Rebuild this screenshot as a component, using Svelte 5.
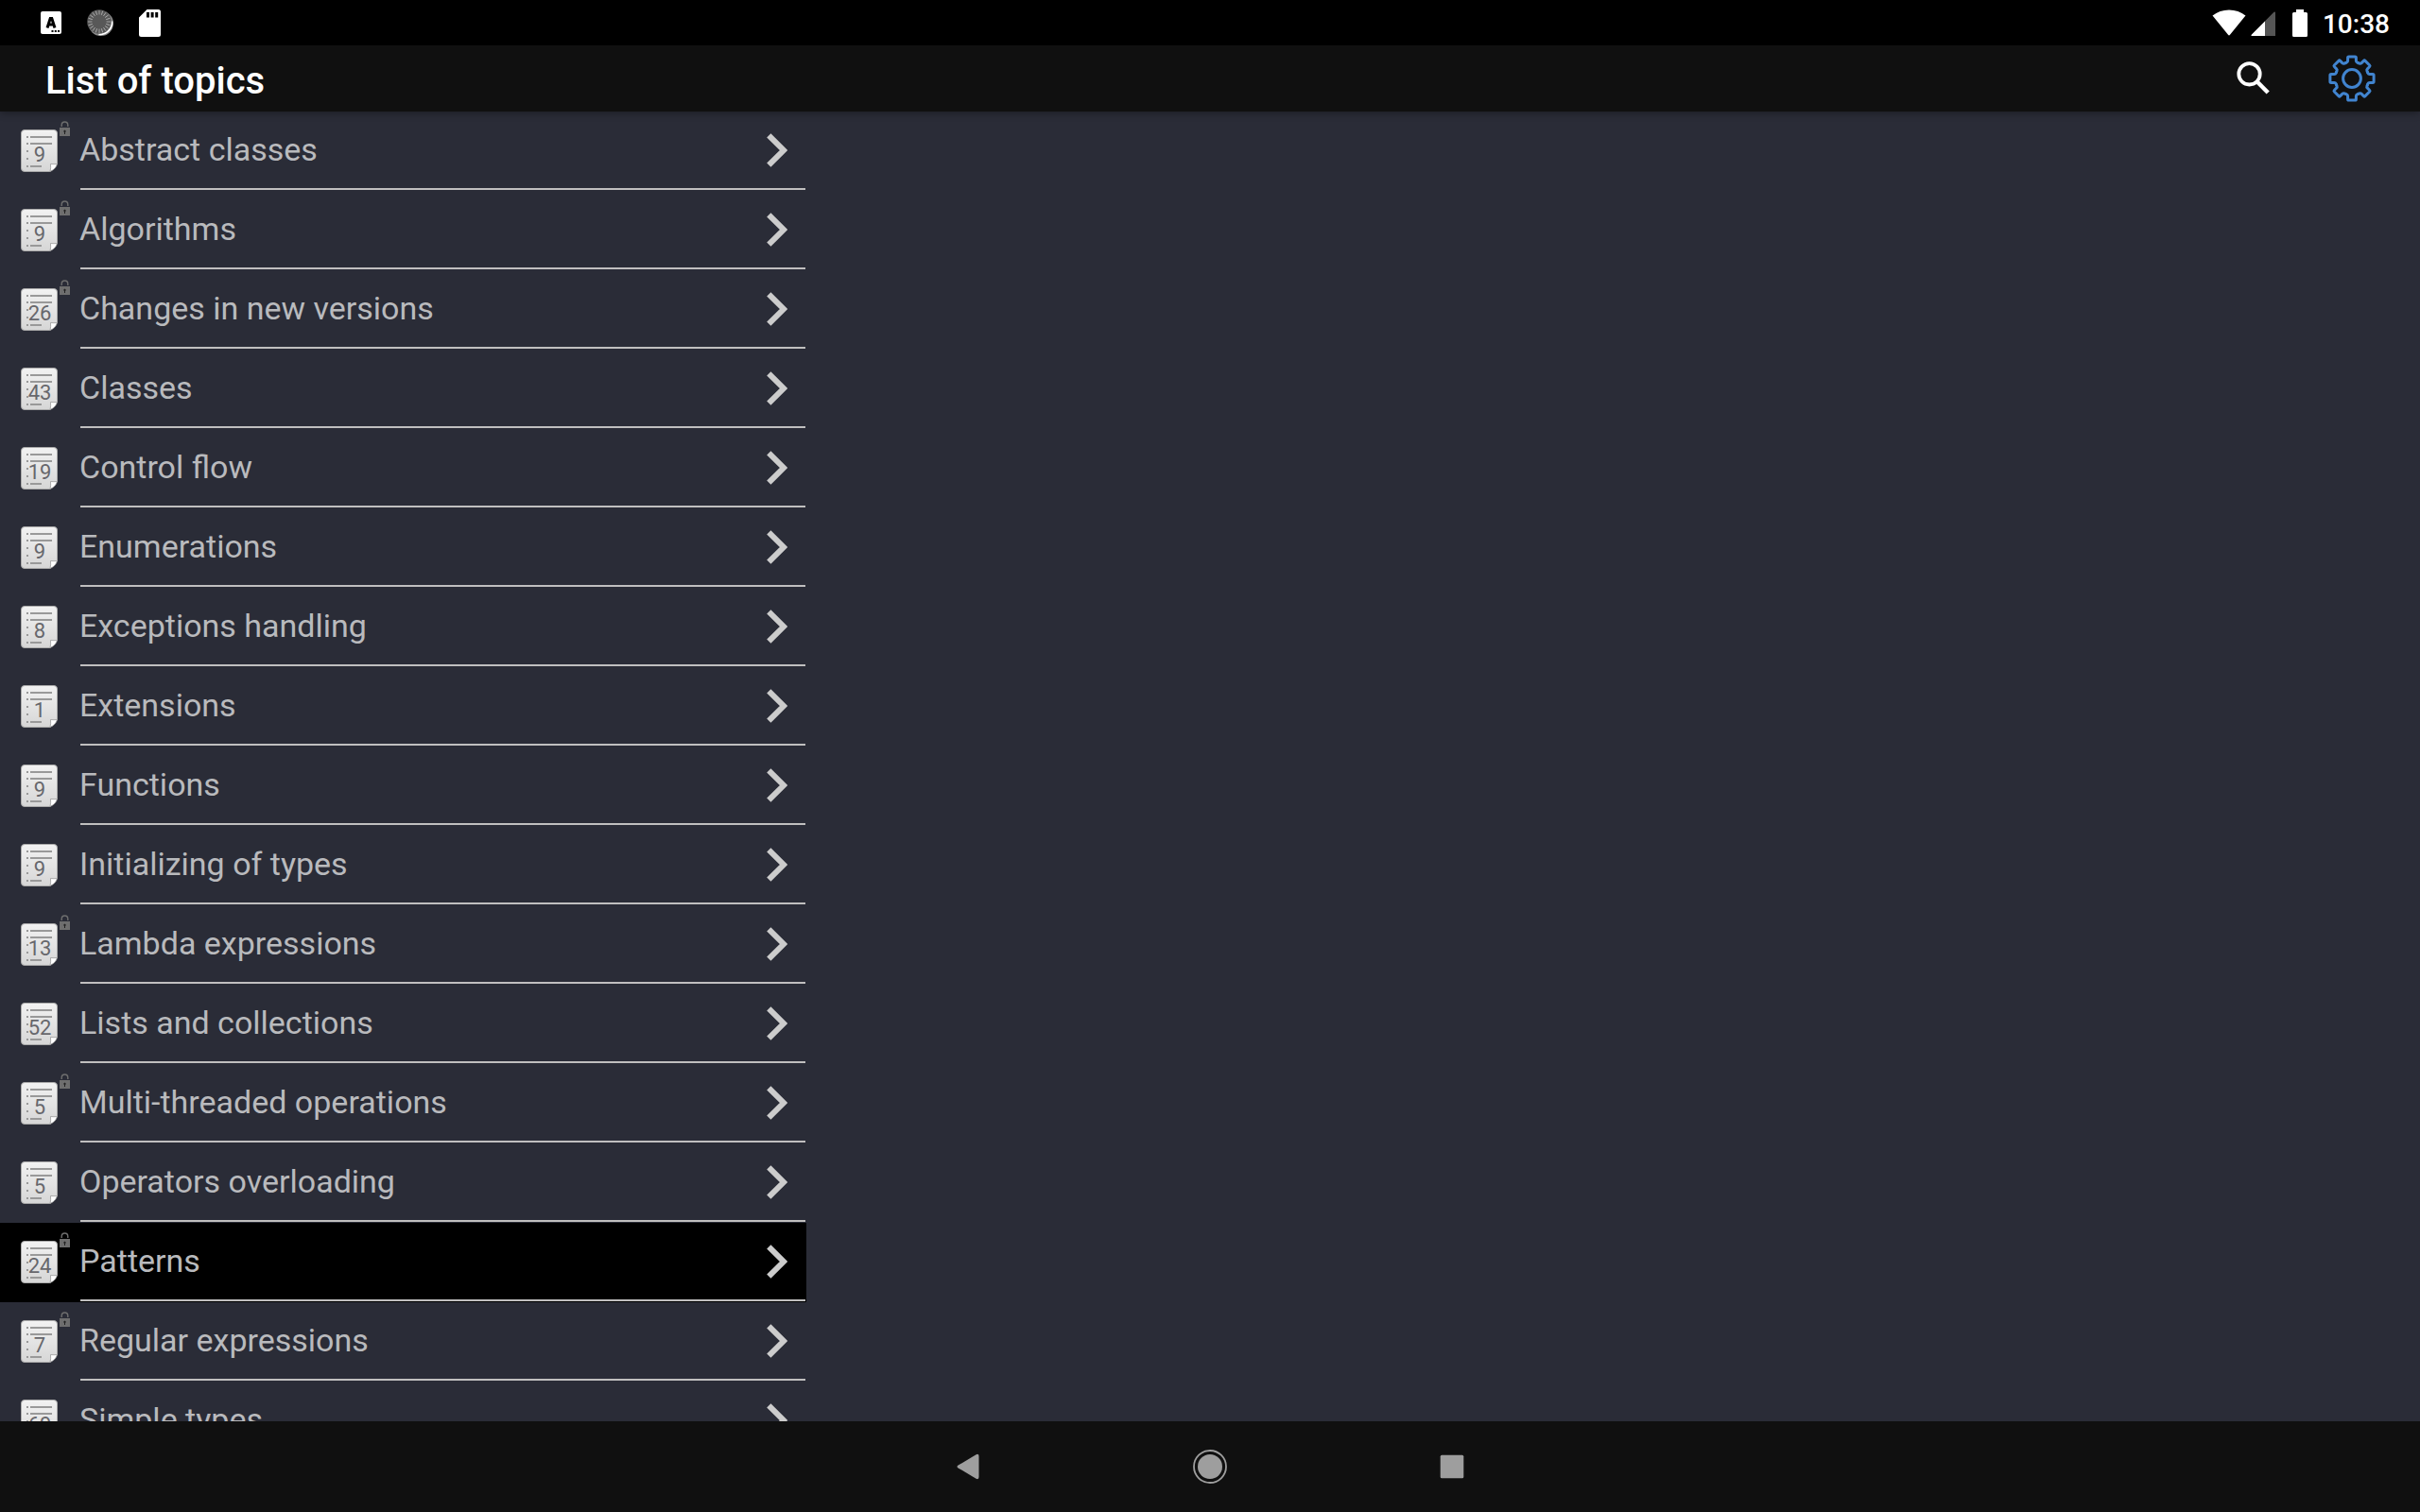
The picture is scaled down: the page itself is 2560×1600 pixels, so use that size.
<script lang="ts">
	type Topic = { title: string; count: number; locked?: boolean };

	const topics: Topic[] = [
		{ title: 'Abstract classes', count: 9, locked: true },
		{ title: 'Algorithms', count: 9, locked: true },
		{ title: 'Changes in new versions', count: 26, locked: true },
		{ title: 'Classes', count: 43 },
		{ title: 'Control flow', count: 19 },
		{ title: 'Enumerations', count: 9 },
		{ title: 'Exceptions handling', count: 8 },
		{ title: 'Extensions', count: 1 },
		{ title: 'Functions', count: 9 },
		{ title: 'Initializing of types', count: 9 },
		{ title: 'Lambda expressions', count: 13, locked: true },
		{ title: 'Lists and collections', count: 52 },
		{ title: 'Multi-threaded operations', count: 5, locked: true },
		{ title: 'Operators overloading', count: 5 },
		{ title: 'Patterns', count: 24, locked: true },
		{ title: 'Regular expressions', count: 7, locked: true },
		{ title: 'Simple types', count: 69 }
	];

	let selected = $state('Patterns');

	// Ticks round the sync icon
	const ticks = Array.from({ length: 20 }, (_, i) => i * 18);
	const teeth = [0, 45, 90, 135, 180, 225, 270, 315];
	// Outline of one gear tooth, repeated by rotation
	const tooth =
		'M-6.8 -16.4 L-5.6 -16.9 Q-4.4 -17.4 -4.4 -18.8 V-22 Q-4.4 -23.1 -3.3 -23.1 H3.3 Q4.4 -23.1 4.4 -22 V-18.8 Q4.4 -17.4 5.6 -16.9 L6.8 -16.4';
</script>

<div class="screen">
	<div class="status-bar">
		<div class="notifications">
			<svg class="keyboard" viewBox="0 0 22 24">
				<rect width="22" height="24" rx="2" fill="#fff" />
				<path d="M7 17.5 10.2 7.6H11.8L15 17.5M8.3 14H13.7" fill="none" stroke="#000" stroke-width="3" />
				<path d="M11.5 20h2v2h-2zM14.8 20h2v2h-2zM18 20h2v2h-2z" fill="#000" />
			</svg>
			<svg class="sync" viewBox="0 0 28 28">
				<circle cx="14.8" cy="14.8" r="13.2" fill="#8a8a8a" />
				<path d="M26.2 12.5A12.6 12.6 0 0 1 12.5 26.2" fill="none" stroke="#fff" stroke-width="2.2" />
				<circle cx="13" cy="13" r="12.8" fill="#585858" />
				{#each ticks as angle}
					<path d="M13 1v4.4" stroke="#aaa" stroke-width="0.9" transform="rotate({angle} 13 13)" />
				{/each}
			</svg>
			<svg class="sd" viewBox="0 0 23 29">
				<path
					fill-rule="evenodd"
					fill="#fff"
					d="M8.5 0H20.5Q23 0 23 2.5V26.5Q23 29 20.5 29H2.5Q0 29 0 26.5V8.5ZM8 3V8.6H11V3ZM12.6 3V8.6H15.6V3ZM17.2 3V8.6H20.2V3Z"
				/>
			</svg>
		</div>
		<div class="system">
			<svg class="wifi" viewBox="0 0 36 28">
				<path d="M0.5 6.6Q8 0.5 18 0.5T35.5 6.6L19 26.8Q18 28 17 26.8Z" fill="#fff" />
			</svg>
			<svg class="signal" viewBox="0 0 26 26">
				<path d="M26 1.5V26H0.8Q0 25.2 1 24.4L24.5 0.8Q26 0 26 1.5Z" fill="#555" />
				<path d="M15 10.5V26H0.8Q0 25.2 1 24.4Z" fill="#fff" />
			</svg>
			<svg class="battery" viewBox="0 0 16 29">
				<path d="M4 0H12V3H14.5Q16 3 16 4.5V27.5Q16 29 14.5 29H1.5Q0 29 0 27.5V4.5Q0 3 1.5 3H4Z" fill="#fff" />
			</svg>
			<span class="clock">10:38</span>
		</div>
	</div>

	<header>
		<h1>List of topics</h1>
		<button aria-label="Search">
			<svg class="search" viewBox="0 0 36 36">
				<circle cx="13.5" cy="13.3" r="11.2" fill="none" stroke="#fff" stroke-width="3.8" />
				<path d="M21.5 21.3 33.2 33" stroke="#fff" stroke-width="4.4" />
			</svg>
		</button>
		<button aria-label="Settings">
			<svg class="gear" viewBox="-25 -25 50 50">
				<g fill="none" stroke="#4184cf" stroke-width="3" stroke-linejoin="round" stroke-linecap="round">
					<circle r="9.4" />
					{#each teeth as angle}
						<path d={tooth} transform="rotate({angle})" />
					{/each}
				</g>
			</svg>
		</button>
	</header>

	<main>
		<ul>
			{#each topics as topic}
				<li class:selected={topic.title === selected}>
					<button class="topic" onclick={() => (selected = topic.title)}>
						<span class="icons">
							<svg class="page" viewBox="0 0 39 45">
								<defs>
									<linearGradient id="paper" x1="0" y1="0" x2="0" y2="1">
										<stop offset="0" stop-color="#f2f2f2" />
										<stop offset="1" stop-color="#d6d6d6" />
									</linearGradient>
								</defs>
								<path
									d="M4 .5H35Q38.5 .5 38.5 4V36.5L31 44.5H4Q.5 44.5 .5 41V4Q.5 .5 4 .5Z"
									fill="url(#paper)"
									stroke="#aaa"
								/>
								<path d="M31 44.5Q32 41 31.5 36.5Q35 37 38.5 36.5Q37 42 31 44.5Z" fill="#fff" stroke="#999" stroke-width=".8" />
								<path
									d="M6 7h2v2H6zM10 7h23v2H10zM6 14h2v2H6zM10 14h23v2H10zM6 22h2v2H6zM6 30h2v2H6zM6 38h2v2H6zM10 38h12v2H10z"
									fill="#999"
								/>
							</svg>
							<span class="count">{topic.count}</span>
							{#if topic.locked}
								<svg class="lock" viewBox="0 0 11 16">
									<path d="M2.2 6V4.5Q2.2 1 5.5 1T8.8 4.5V6" fill="none" stroke="#6e6e6e" stroke-width="1.4" />
									<path d="M0 7H11V16H0Z" fill="#6e6e6e" />
									<path d="M4.2 10.8 5.5 9.4 6.8 10.8V11.6H6V14H5V11.6H4.2Z" fill="#222" />
								</svg>
							{/if}
						</span>
						<span class="label">
							<span class="title">{topic.title}</span>
							<svg class="chevron" viewBox="0 0 22 36">
								<path d="M2.3 2.3 18 18 2.3 33.7" fill="none" stroke="#ccc" stroke-width="6" />
							</svg>
						</span>
					</button>
				</li>
			{/each}
		</ul>
	</main>

	<nav>
		<button aria-label="Back">
			<svg viewBox="-20 -20 40 40">
				<path d="M-10.4 -1.4 8.6 -12.8Q11.5 -14 11.5 -11V11Q11.5 14 8.6 12.8L-10.4 1.4Q-12.6 0 -10.4 -1.4Z" fill="#9e9e9e" />
			</svg>
		</button>
		<button aria-label="Home">
			<svg viewBox="-20 -20 40 40">
				<circle r="17" fill="none" stroke="#9e9e9e" stroke-width="1.8" />
				<circle r="13" fill="#9e9e9e" />
			</svg>
		</button>
		<button aria-label="Overview">
			<svg viewBox="-20 -20 40 40">
				<rect x="-12.3" y="-12.3" width="24.6" height="24.6" rx="1.5" fill="#9e9e9e" />
			</svg>
		</button>
	</nav>
</div>

<style>
	:global(body) {
		margin: 0;
		background: #2a2c37;
	}

	.screen {
		display: flex;
		flex-direction: column;
		height: 100vh;
		overflow: hidden;
		font-family: Roboto, 'Liberation Sans', sans-serif;
		color: #fff;
	}

	svg {
		display: block;
		flex: none;
	}

	button {
		padding: 0;
		border: 0;
		background: none;
		color: inherit;
		font: inherit;
	}

	.status-bar {
		display: flex;
		flex: none;
		justify-content: space-between;
		height: 48px;
		padding: 0 32px 0 43px;
		box-sizing: border-box;
		background: #000;
	}

	.notifications,
	.system {
		display: flex;
		align-items: center;
	}

	.keyboard {
		width: 22px;
		height: 24px;
	}

	.sync {
		width: 28px;
		height: 28px;
		margin-left: 27px;
	}

	.sd {
		width: 23px;
		height: 29px;
		margin-left: 27px;
	}

	.wifi {
		width: 36px;
		height: 28px;
	}

	.signal {
		width: 26px;
		height: 26px;
		margin: 2px 0 0 5px;
	}

	.battery {
		width: 16px;
		height: 29px;
		margin: 0 16px 0 18px;
	}

	.clock {
		padding-top: 3px;
		font-size: 28px;
		font-weight: 500;
		line-height: 32px;
	}

	header {
		display: flex;
		flex: none;
		align-items: center;
		height: 70px;
		padding: 0 47px 0 48px;
		box-sizing: border-box;
		background: #101010;
		box-shadow: 0 1px 8px rgba(0, 0, 0, 0.4);
		z-index: 1;
	}

	h1 {
		flex: 1;
		margin: 0;
		padding-top: 5px;
		font-size: 40px;
		font-weight: 500;
		line-height: 48px;
	}

	.search {
		width: 36px;
		height: 36px;
		margin-right: 61px;
	}

	.gear {
		width: 50px;
		height: 50px;
	}

	main {
		flex: 1;
		min-height: 0;
		overflow: hidden;
	}

	ul {
		width: 853px;
		margin: 0;
		padding: 0;
		list-style: none;
	}

	li {
		height: 84px;
	}

	li.selected {
		background: #000;
	}

	.topic {
		display: flex;
		width: 100%;
		height: 100%;
		text-align: left;
	}

	.icons {
		position: relative;
		flex: none;
		width: 63px;
		height: 64px;
		padding: 19px 0 0 22px;
		box-sizing: border-box;
	}

	.page {
		width: 39px;
		height: 45px;
	}

	.count {
		position: absolute;
		top: 33px;
		left: 22px;
		width: 40px;
		font-size: 22px;
		line-height: 26px;
		text-align: center;
		color: #67676c;
	}

	.lock {
		position: absolute;
		top: 10px;
		left: 63px;
		width: 11px;
		height: 16px;
	}

	.label {
		display: flex;
		flex: 1;
		align-items: center;
		height: 83px;
		margin: 0 1px 0 22px;
		padding-right: 19px;
		border-bottom: 2px solid #c0bfbf;
		box-sizing: border-box;
	}

	.title {
		flex: 1;
		margin-left: -1px;
		padding-bottom: 2px;
		font-size: 34px;
		line-height: 40px;
		white-space: nowrap;
		color: #b9babd;
	}

	.chevron {
		width: 22px;
		height: 36px;
	}

	nav {
		display: flex;
		flex: none;
		justify-content: center;
		align-items: center;
		gap: 216px;
		height: 96px;
		background: #101010;
	}

	nav svg {
		width: 40px;
		height: 40px;
	}
</style>
